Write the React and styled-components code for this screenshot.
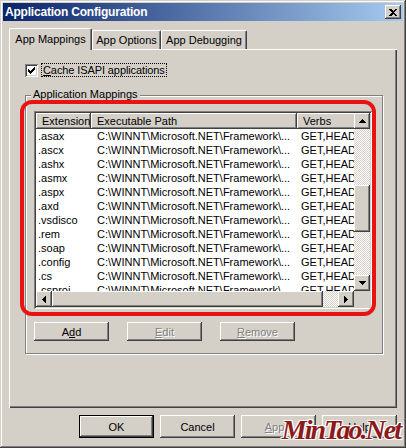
import React from "react";
import styled, { createGlobalStyle } from "styled-components";

const face = "#d4d0c8";
const raised = `inset -1px -1px #404040, inset 1px 1px #fff, inset -2px -2px #808080, inset 2px 2px ${face}`;
const sunken = `inset 1px 1px #808080, inset -1px -1px #fff, inset 2px 2px #404040, inset -2px -2px ${face}`;

const GlobalStyle = createGlobalStyle`
    html, body {
        margin: 0;
        padding: 0;
        background: ${face};
    }
    body {
        font-family: "Liberation Sans", Arial, sans-serif;
        font-size: 11px;
        color: #000;
    }
    * {
        box-sizing: border-box;
    }
`;

const Window = styled.div`
    position: relative;
    width: 406px;
    height: 448px;
    padding: 3px;
    background: ${face};
    box-shadow: inset -1px -1px #404040, inset 1px 1px ${face}, inset -2px -2px #808080, inset 2px 2px #fff;
    display: flex;
    flex-direction: column;
    overflow: hidden;
`;

const TitleBar = styled.div`
    height: 18px;
    display: flex;
    align-items: center;
    justify-content: space-between;
    padding: 0 2px 0 2px;
    background: linear-gradient(to right, #0a246a, #a6caf0);
    color: #fff;
    font-weight: bold;
    font-size: 12px;
    letter-spacing: -0.2px;
`;

const CloseButton = styled.div`
    width: 16px;
    height: 14px;
    background: ${face};
    box-shadow: ${raised};
    display: flex;
    align-items: center;
    justify-content: center;
`;

const Body = styled.div`
    padding: 7px 6px 0 6px;
    display: flex;
    flex-direction: column;
`;

const TabStrip = styled.div`
    display: flex;
    align-items: flex-start;
    height: 22px;
    margin-bottom: -1px;
    position: relative;
    z-index: 1;
`;

const Tab = styled.div`
    width: ${(p) => p.$w}px;
    height: ${(p) => (p.$active ? 22 : 19)}px;
    margin-top: ${(p) => (p.$active ? 0 : 2)}px;
    background: ${face};
    border-top: 1px solid #fff;
    border-left: 1px solid #fff;
    border-right: 1px solid #404040;
    border-radius: 2px 2px 0 0;
    box-shadow: inset -1px 0 #808080;
    display: flex;
    align-items: center;
    justify-content: center;
    padding-bottom: ${(p) => (p.$active ? 2 : 0)}px;
`;

const Panel = styled.div`
    height: 359px;
    padding: 14px 0 0 16px;
    box-shadow: inset 1px 1px #fff, inset -1px -1px #404040, inset -2px -2px #808080;
`;

const CheckRow = styled.div`
    display: flex;
    align-items: center;
    gap: 3px;
    height: 14px;
`;

const CheckBox = styled.div`
    width: 13px;
    height: 13px;
    background: #fff;
    box-shadow: ${sunken};
    display: flex;
    align-items: center;
    justify-content: center;
`;

const FocusLabel = styled.span`
    border: 1px dotted #000;
    padding: 0 1px;
    line-height: 12px;
    letter-spacing: -0.1px;
`;

const GroupBox = styled.div`
    position: relative;
    margin-top: 18px;
    width: 358px;
    height: 259px;
    border: 1px solid #808080;
    box-shadow: 1px 1px 0 #fff, inset 1px 1px 0 #fff;
    padding: 15px 0 0 8px;
`;

const Legend = styled.span`
    position: absolute;
    top: -8px;
    left: 5px;
    padding: 0 2px;
    background: ${face};
    line-height: 13px;
`;

const Annotation = styled.div`
    position: absolute;
    left: -6px;
    top: 4px;
    width: 356px;
    height: 216px;
    border: 4px solid #e81414;
    border-radius: 12px;
    pointer-events: none;
`;

const ListView = styled.div`
    width: 338px;
    height: 198px;
    padding: 2px;
    background: #fff;
    box-shadow: ${sunken};
    display: grid;
    grid-template-columns: 1fr 16px;
    grid-template-rows: 1fr 16px;
`;

const ListContent = styled.div`
    overflow: hidden;
    background: #fff;
`;

const HeaderRow = styled.div`
    display: flex;
    height: 16px;
    white-space: nowrap;
`;

const HeaderCell = styled.div`
    flex: none;
    width: ${(p) => p.$w}px;
    background: ${face};
    box-shadow: ${raised};
    padding-left: 6px;
    line-height: 16px;
`;

const Row = styled.div`
    display: flex;
    height: 14px;
    line-height: 14px;
    white-space: nowrap;
`;

const Cell = styled.div`
    flex: none;
    width: ${(p) => p.$w}px;
    padding-left: ${(p) => p.$pad}px;
    overflow: hidden;
`;

const ScrollBar = styled.div`
    display: flex;
    flex-direction: ${(p) => (p.$vertical ? "column" : "row")};
    background: ${face};
`;

const ArrowButton = styled.div`
    flex: none;
    width: 16px;
    height: 16px;
    background: ${face};
    box-shadow: ${raised};
    display: flex;
    align-items: center;
    justify-content: center;
`;

const Track = styled.div`
    flex: 1;
    display: flex;
    flex-direction: ${(p) => (p.$vertical ? "column" : "row")};
    background: repeating-conic-gradient(${face} 0 25%, #fff 0 50%) 0 0 / 2px 2px;
`;

const Thumb = styled.div`
    flex: none;
    background: ${face};
    box-shadow: ${raised};
`;

const Corner = styled.div`
    background: ${face};
`;

const ButtonRow = styled.div`
    display: flex;
    gap: ${(p) => p.$gap}px;
    margin-top: ${(p) => p.$top}px;
    justify-content: ${(p) => (p.$end ? "flex-end" : "flex-start")};
`;

const Button = styled.div`
    width: 75px;
    height: ${(p) => p.$h}px;
    background: ${face};
    box-shadow: ${raised};
    border: ${(p) => (p.$default ? "1px solid #000" : "none")};
    display: flex;
    align-items: center;
    justify-content: center;
    color: ${(p) => (p.$disabled ? "#808080" : "#000")};
    text-shadow: ${(p) => (p.$disabled ? "1px 1px 0 #fff" : "none")};
`;

const Watermark = styled.div`
    position: absolute;
    right: 6px;
    bottom: 2px;
    font-family: "Liberation Serif", "Times New Roman", serif;
    font-style: italic;
    font-weight: bold;
    font-size: 28px;
    letter-spacing: -2px;
    color: #8c1a1a;
    text-shadow: 1px 1px 0 #fff, -1px -1px 0 #fff, 1px -1px 0 #fff, -1px 1px 0 #fff;
    pointer-events: none;
`;

const Arrow = ({ dir }) => {
    const paths = {
        up: "M3 0h1v1h1v1h1v1h1v1H0V3h1V2h1V1h1z",
        down: "M0 0h7v1H6v1H5v1H4v1H3V3H2V2H1V1H0z",
        left: "M3 0h1v7H3V6H2V5H1V4H0V3h1V2h1V1h1z",
        right: "M0 0h1v1h1v1h1v1h1v1H3v1H2v1H1v1H0z",
    };
    const vertical = dir === "up" || dir === "down";
    return (
        <svg width={vertical ? 7 : 4} height={vertical ? 4 : 7} shapeRendering="crispEdges">
            <path d={paths[dir]} fill="#000" />
        </svg>
    );
};

const rows = [".asax", ".ascx", ".ashx", ".asmx", ".aspx", ".axd", ".vsdisco", ".rem", ".soap", ".config", ".cs", ".csproj"];
const path = "C:\\WINNT\\Microsoft.NET\\Framework\\...";

export default function App() {
    return (
        <>
            <GlobalStyle />
            <Window>
                <TitleBar>
                    <span>Application Configuration</span>
                    <CloseButton>
                        <svg width="8" height="7" shapeRendering="crispEdges">
                            <path d="M0 0h2l2 2 2-2h2v1L5 3.5 8 6v1H6L4 5 2 7H0V6l3-2.5L0 1z" fill="#000" />
                        </svg>
                    </CloseButton>
                </TitleBar>
                <Body>
                    <TabStrip>
                        <Tab $active $w={83}>App Mappings</Tab>
                        <Tab $w={69}>App Options</Tab>
                        <Tab $w={86}>App Debugging</Tab>
                    </TabStrip>
                    <Panel>
                        <CheckRow>
                            <CheckBox>
                                <svg width="7" height="7" shapeRendering="crispEdges">
                                    <path d="M6 0h1v3H6v1H5v1H4v1H3v1H2V6H1V5H0V2h1v1h1v1h1V3h1V2h1V1h1z" fill="#000" />
                                </svg>
                            </CheckBox>
                            <FocusLabel><u>C</u>ache ISAPI applications</FocusLabel>
                        </CheckRow>
                        <GroupBox>
                            <Legend>Application Mappings</Legend>
                            <ListView>
                                <ListContent>
                                    <HeaderRow>
                                        <HeaderCell $w={55}>Extension</HeaderCell>
                                        <HeaderCell $w={206}>Executable Path</HeaderCell>
                                        <HeaderCell $w={70}>Verbs</HeaderCell>
                                    </HeaderRow>
                                    {rows.map((ext) => (
                                        <Row key={ext}>
                                            <Cell $w={55} $pad={2}>{ext}</Cell>
                                            <Cell $w={206} $pad={6}>{path}</Cell>
                                            <Cell $w={70} $pad={4}>GET,HEAD</Cell>
                                        </Row>
                                    ))}
                                </ListContent>
                                <ScrollBar $vertical>
                                    <ArrowButton><Arrow dir="up" /></ArrowButton>
                                    <Track $vertical>
                                        <Thumb style={{ marginTop: 56, height: 47 }} />
                                    </Track>
                                    <ArrowButton><Arrow dir="down" /></ArrowButton>
                                </ScrollBar>
                                <ScrollBar>
                                    <ArrowButton><Arrow dir="left" /></ArrowButton>
                                    <Track>
                                        <Thumb style={{ width: 271 }} />
                                    </Track>
                                    <ArrowButton><Arrow dir="right" /></ArrowButton>
                                </ScrollBar>
                                <Corner />
                            </ListView>
                            <ButtonRow $gap={18} $top={13}>
                                <Button $h={19}>A<u>d</u>d</Button>
                                <Button $h={19} $disabled><u>E</u>dit</Button>
                                <Button $h={19} $disabled><u>R</u>emove</Button>
                            </ButtonRow>
                            <Annotation />
                        </GroupBox>
                    </Panel>
                    <ButtonRow $gap={6} $top={7} $end>
                        <Button $h={23} $default>OK</Button>
                        <Button $h={23}>Cancel</Button>
                        <Button $h={23} $disabled><u>A</u>pply</Button>
                        <Button $h={23}>Help</Button>
                    </ButtonRow>
                </Body>
                <Watermark>MinTao.Net</Watermark>
            </Window>
        </>
    );
}
